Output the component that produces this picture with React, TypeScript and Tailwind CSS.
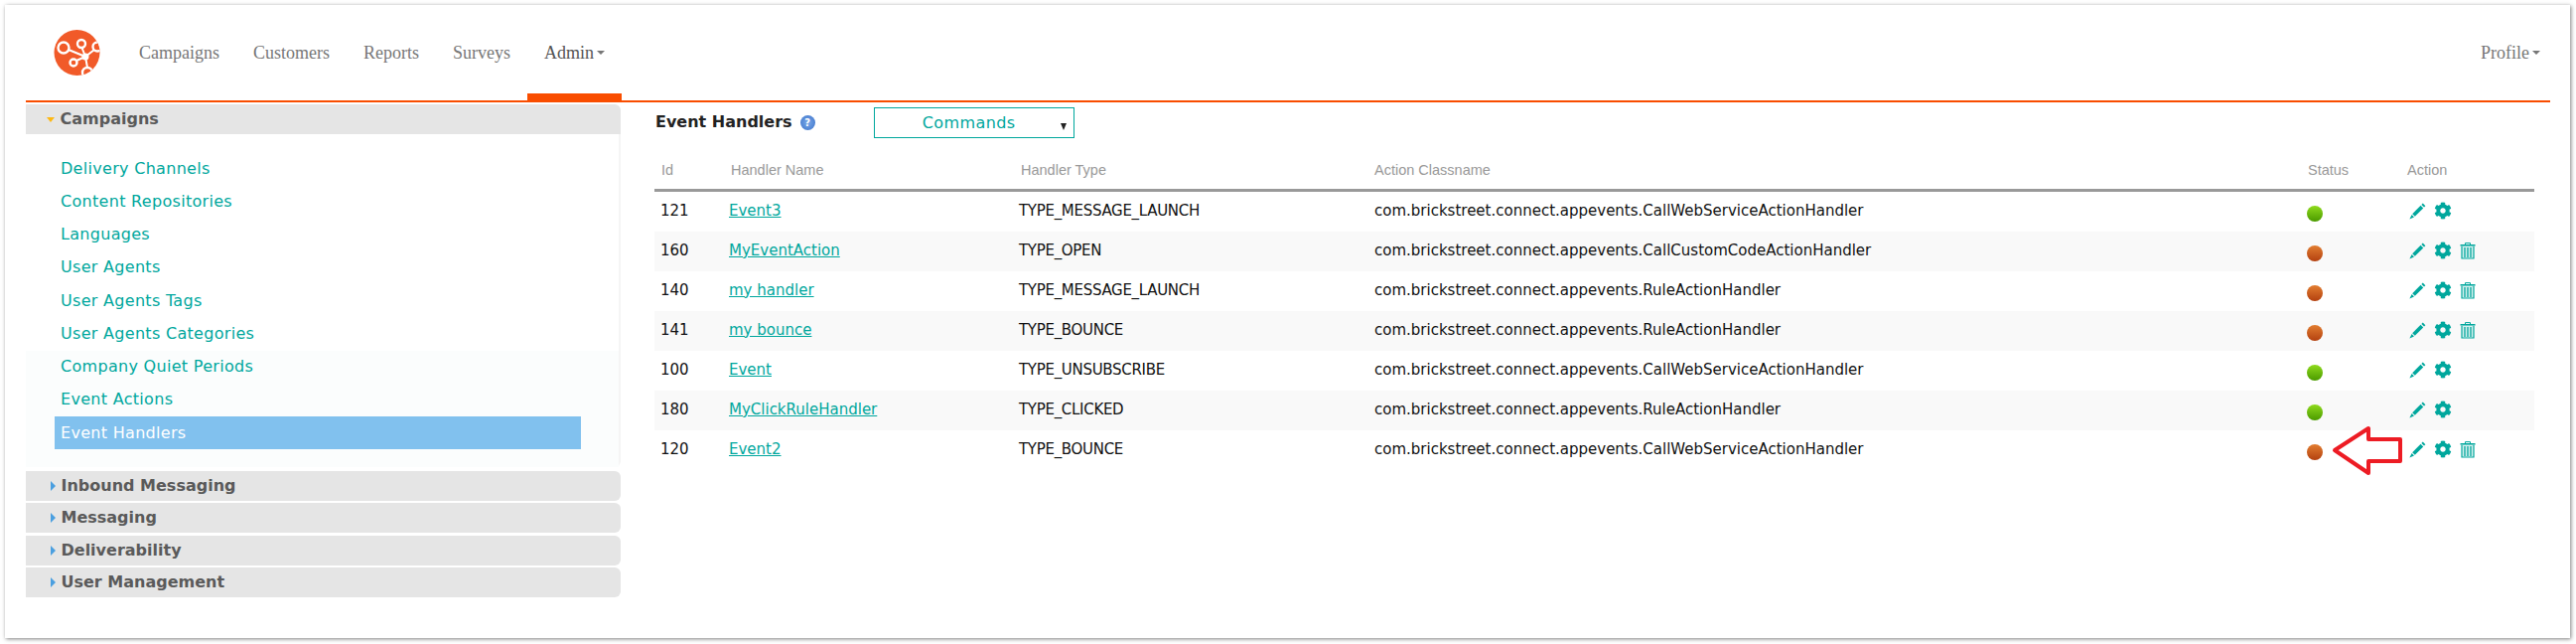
import React from "react";
import { FaCog } from "react-icons/fa";

const sans = "font-['DejaVu_Sans','Noto_Sans',sans-serif]";

const Logo = () => (
  <svg width="47" height="46" viewBox="0 0 47 46" className="shrink-0">
    <defs>
      <clipPath id="lg"><circle cx="23.5" cy="23" r="23" /></clipPath>
    </defs>
    <circle cx="23.5" cy="23" r="23" fill="#f15a29" />
    <g clipPath="url(#lg)" stroke="#fff" fill="none" strokeWidth="2.4">
      <path d="M15 20 L32 27 M28.5 18 L32 27 M23 31 L32 27 M41 20 L32 27 M34 38 L32 27" strokeWidth="2" />
      <circle cx="10" cy="18" r="5.5" fill="#f15a29" />
      <circle cx="28" cy="14" r="4" fill="#f15a29" />
      <circle cx="20" cy="33" r="3.5" fill="#f15a29" />
      <circle cx="44" cy="17" r="4.5" fill="#f15a29" />
      <circle cx="34" cy="43" r="5" fill="#f15a29" />
      <circle cx="32" cy="27" r="3.5" fill="#fff" stroke="none" />
    </g>
  </svg>
);

const Pencil = () => (
  <svg width="17" height="17" viewBox="0 0 17 17" className="shrink-0">
    <path d="M3.2 11.2 L11.6 2.8 L14.2 5.4 L5.8 13.8 Z" fill="#00a79d" />
    <path d="M12.4 2 L13.8 0.6 L16.4 3.2 L15 4.6 Z" fill="#00a79d" />
    <path d="M2.6 12 L5 14.4 L0.4 16.6 Z" fill="#00a79d" />
  </svg>
);

const Trash = () => (
  <svg width="16" height="17" viewBox="0 0 16 17" className="shrink-0">
    <path d="M5.5 2 V0.6 H10.5 V2" fill="none" stroke="#00a79d" strokeWidth="1" />
    <rect x="0.5" y="2" width="15" height="1.6" fill="#00a79d" />
    <path d="M2 4 V16 H14 V4" fill="#d6f0ee" stroke="#00a79d" strokeWidth="1.2" />
    <path d="M5 5 V15 M8 5 V15 M11 5 V15" stroke="#00a79d" strokeWidth="1.3" />
  </svg>
);

const Caret = () => (
  <span className="ml-[3px] inline-block w-0 h-0 border-x-[4px] border-x-transparent border-t-[4px] border-t-[#777] align-middle" />
);

const NavItem = ({ label, active, caret }: { label: string; active?: boolean; caret?: boolean }) => (
  <div className="relative h-full flex items-center px-[17px] whitespace-nowrap">
    <span className={active ? "text-[#555]" : "text-[#777]"}>{label}</span>
    {caret && <Caret />}
    {active && <div className="absolute left-0 right-0 bottom-0 h-[7px] bg-[#f94d00]" />}
  </div>
);

const rows = [
  { id: "121", name: "Event3", type: "TYPE_MESSAGE_LAUNCH", cls: "com.brickstreet.connect.appevents.CallWebServiceActionHandler", on: true, del: false },
  { id: "160", name: "MyEventAction", type: "TYPE_OPEN", cls: "com.brickstreet.connect.appevents.CallCustomCodeActionHandler", on: false, del: true },
  { id: "140", name: "my handler", type: "TYPE_MESSAGE_LAUNCH", cls: "com.brickstreet.connect.appevents.RuleActionHandler", on: false, del: true },
  { id: "141", name: "my bounce", type: "TYPE_BOUNCE", cls: "com.brickstreet.connect.appevents.RuleActionHandler", on: false, del: true },
  { id: "100", name: "Event", type: "TYPE_UNSUBSCRIBE", cls: "com.brickstreet.connect.appevents.CallWebServiceActionHandler", on: true, del: false },
  { id: "180", name: "MyClickRuleHandler", type: "TYPE_CLICKED", cls: "com.brickstreet.connect.appevents.RuleActionHandler", on: true, del: false },
  { id: "120", name: "Event2", type: "TYPE_BOUNCE", cls: "com.brickstreet.connect.appevents.CallWebServiceActionHandler", on: false, del: true },
];

const cols = "grid grid-cols-[69px_292px_358px_939px_101px_134px]";

const menuA = ["Delivery Channels", "Content Repositories", "Languages", "User Agents", "User Agents Tags", "User Agents Categories"];
const menuB = ["Company Quiet Periods", "Event Actions"];

const MenuItem = ({ label }: { label: string }) => (
  <div className="h-[33.25px] flex items-center ml-[29px] w-[530px] pl-[6px] text-[#00a79d] text-[16px] tracking-[0.3px] whitespace-nowrap">{label}</div>
);

const Section = ({ label }: { label: string }) => (
  <div className="h-[30px] mb-[2.33px] bg-[#e5e5e5] rounded-r-[6px] flex items-center pl-[25px]">
    <span className="w-0 h-0 border-y-[5px] border-y-transparent border-l-[5px] border-l-[#4a9fe0] mr-[5.5px]" />
    <span className="font-bold text-[#5a5a5a] text-[16px] whitespace-nowrap">{label}</span>
  </div>
);

export default function App() {
  return (
    <div className="w-[2594px] h-[648px] bg-white pt-[5px] pl-[5px]">
      <div className={`relative w-[2583px] h-[637px] bg-white shadow-[1px_1px_4px_rgba(0,0,0,0.5)] pl-[21px] text-[15px] ${sans}`}>
        <header className="w-[2542px] h-[98px] border-b-[2px] border-b-[#f94d00] flex items-stretch font-['Liberation_Serif',serif] text-[18px]">
          <div className="pl-[28px] pt-[25px] w-[97px]"><Logo /></div>
          <nav className="flex items-stretch h-full">
            <NavItem label="Campaigns" />
            <NavItem label="Customers" />
            <NavItem label="Reports" />
            <NavItem label="Surveys" />
            <NavItem label="Admin" active caret />
          </nav>
          <div className="ml-auto flex items-center pr-[10px] text-[#777]">
            <span>Profile</span>
            <Caret />
          </div>
        </header>

        <div className="flex pt-[2px]">
          <aside className="w-[599px] shrink-0">
            <div className="h-[30px] bg-[#e5e5e5] rounded-tr-[6px] flex items-center pl-[21px]">
              <span className="w-0 h-0 border-x-[4.5px] border-x-transparent border-t-[5px] border-t-[#fdb813] mr-[5.5px]" />
              <span className="font-bold text-[#5a5a5a] text-[16px]">Campaigns</span>
            </div>
            <div className="h-[335px] border-r-[2px] border-b-[2px] border-[#f5f5f5] rounded-br-[6px] mb-[4px] pt-[18px]">
              {menuA.map((m) => <MenuItem key={m} label={m} />)}
              <div className="bg-[#fbfdfd] pb-[18px] -mb-[18px]">
                {menuB.map((m) => <MenuItem key={m} label={m} />)}
                <div className="h-[33px] flex items-center ml-[29px] w-[530px] pl-[6px] bg-[#81c1ee] text-white text-[16px] tracking-[0.3px]">Event Handlers</div>
              </div>
            </div>
            <Section label="Inbound Messaging" />
            <Section label="Messaging" />
            <Section label="Deliverability" />
            <Section label="User Management" />
          </aside>

          <main className="relative ml-[34px] w-[1893px]">
            <div className="mt-[3px] h-[31px] flex items-center">
              <span className="ml-[1px] -mt-[2px] font-bold text-[#222] text-[16px] whitespace-nowrap">Event Handlers</span>
              <span className="ml-[8px] w-[15px] h-[15px] rounded-full bg-radial from-[#7aa8e8] to-[#3b72c9] text-white text-[10px] font-bold flex items-center justify-center">?</span>
              <div className="relative ml-[59px] w-[202px] h-[31px] border border-[#00a79d] flex items-center justify-center text-[#00a79d] text-[16px] tracking-[0.4px] pr-[10px]">
                Commands
                <span className="absolute right-[7px] top-[15px] w-0 h-0 border-x-[3.5px] border-x-transparent border-t-[7px] border-t-[#222]" />
              </div>
            </div>
            <div className={`${cols} h-[54px] items-end pb-[7px] border-b-[3px] border-b-[#999] text-[14.5px] text-[#999] font-['Liberation_Sans',Arial,sans-serif]`}>
              <div className="pl-[7px]">Id</div>
              <div className="pl-[8px]">Handler Name</div>
              <div className="pl-[8px]">Handler Type</div>
              <div className="pl-[6px]">Action Classname</div>
              <div className="pl-[7px]">Status</div>
              <div className="pl-[6px]">Action</div>
            </div>
            {rows.map((r, i) => (
              <div key={r.id} className={`${cols} h-[40px] items-center text-[#111] ${i % 2 === 1 ? "bg-[#f9f9f9]" : "bg-white"}`}>
                <div className="pl-[6px] -mt-[2px]">{r.id}</div>
                <div className="pl-[6px] -mt-[2px]"><span className="underline text-[#00a79d]">{r.name}</span></div>
                <div className="pl-[6px] -mt-[2px] tracking-[-0.3px]">{r.type}</div>
                <div className="pl-[6px] -mt-[2px]">{r.cls}</div>
                <div className="pl-[6px]">
                  <div className={`w-[16px] h-[16px] mt-[4px] rounded-full bg-linear-to-b ${r.on ? "from-[#8fdb1c] to-[#4a9a00]" : "from-[#e27d30] to-[#b3400f]"}`} />
                </div>
                <div className="pl-[8px] flex items-center gap-[9px] -mt-[2px]">
                  <Pencil />
                  <FaCog className="w-[16px] h-[16px] text-[#00a79d] shrink-0 scale-110" />
                  {r.del && <Trash />}
                </div>
              </div>
            ))}
          </main>
        </div>

        <svg className="absolute left-[2343px] top-[423px]" width="72" height="52" viewBox="0 0 72 52">
          <path d="M3 25 L37 3 L37 14 L69 14 L69 36 L37 36 L37 48 Z" fill="#fff" stroke="#ed1c24" strokeWidth="4" strokeLinejoin="round" />
        </svg>
      </div>
    </div>
  );
}
